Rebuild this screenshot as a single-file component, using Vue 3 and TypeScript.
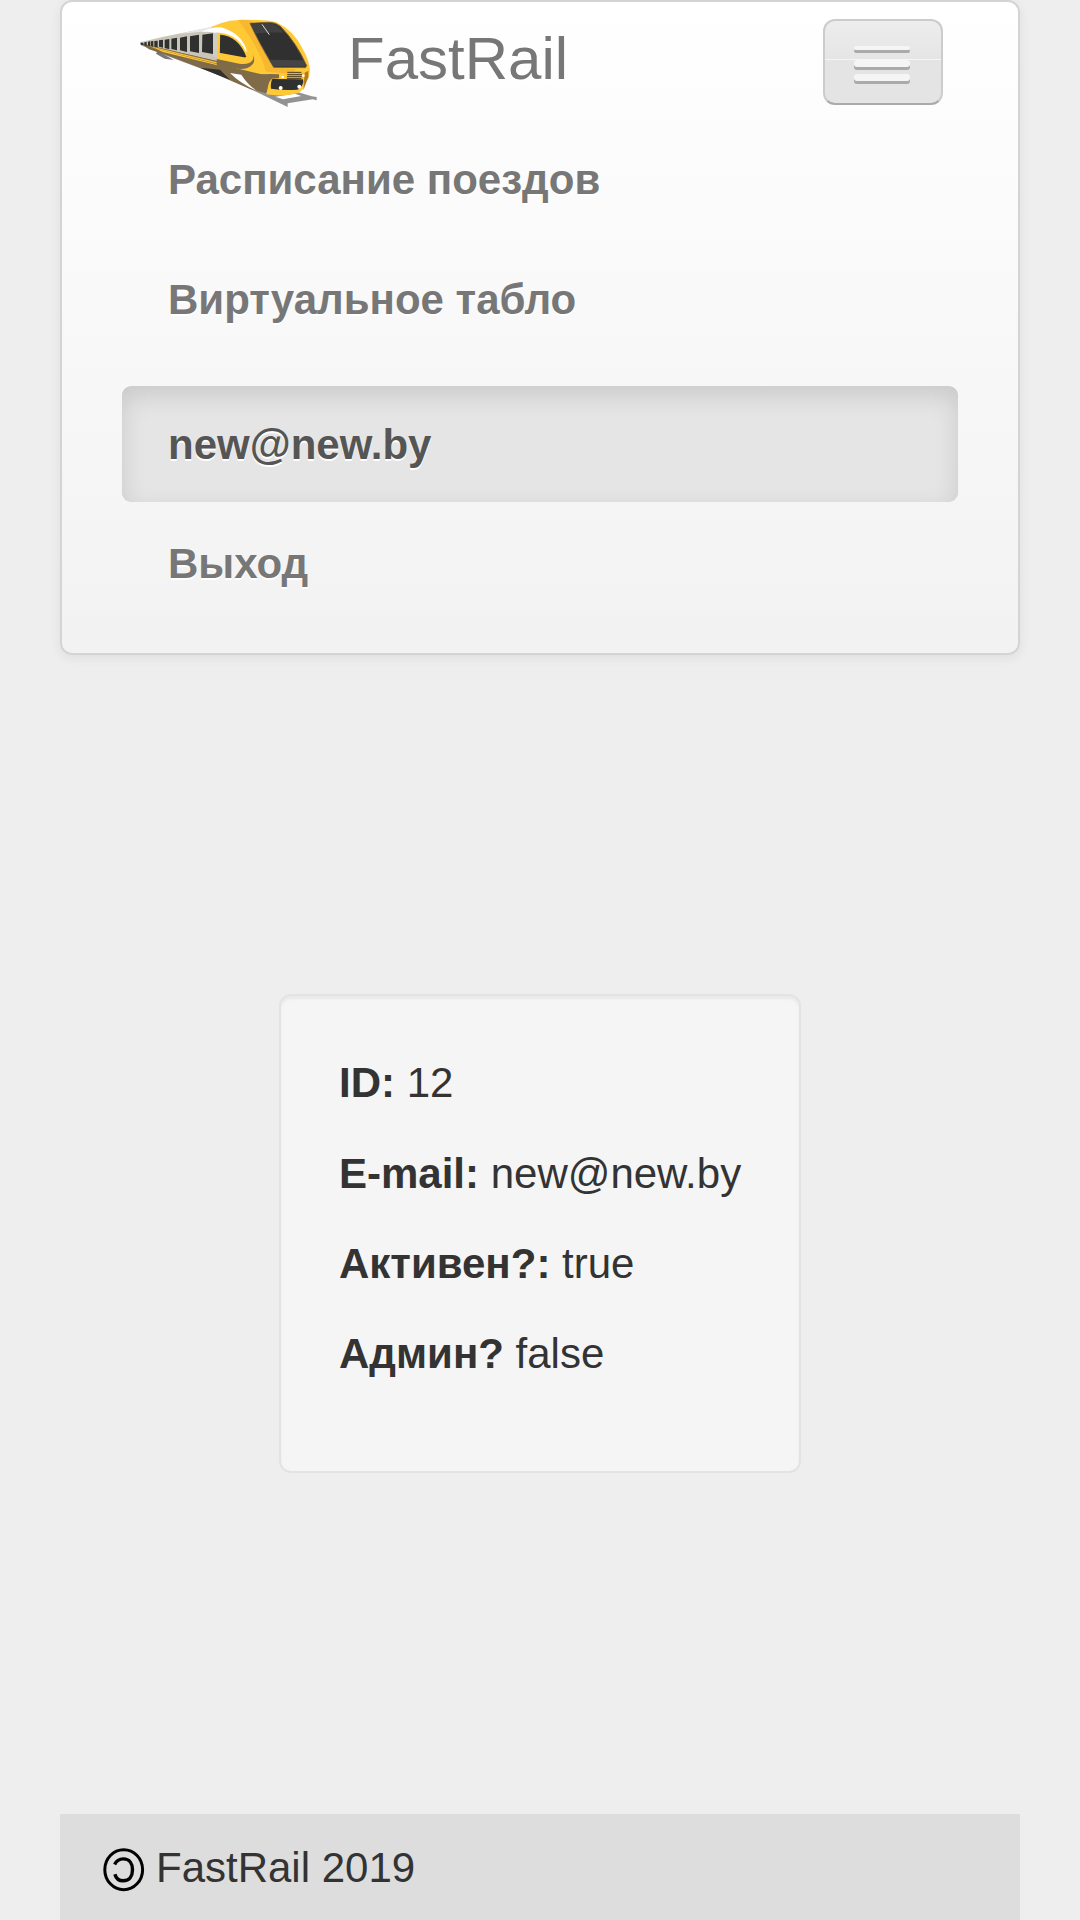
<script setup lang="ts">
interface NavItem { label: string; active?: boolean; separated?: boolean }
interface Field { label: string; value: string }

const items: NavItem[] = [
  { label: 'Расписание поездов' },
  { label: 'Виртуальное табло' },
  { label: 'new@new.by', active: true, separated: true },
  { label: 'Выход' },
]
const fields: Field[] = [
  { label: 'ID:', value: '12' },
  { label: 'E-mail:', value: 'new@new.by' },
  { label: 'Активен?:', value: 'true' },
  { label: 'Админ?', value: 'false' },
]
</script>

<template>
  <div class="page">
    <header class="navbar">
      <div class="top">
        <a class="brand">
          <svg class="train" viewBox="30 27 531 264" preserveAspectRatio="none">
            <path d="M85 128l170 45 230 68 60 18 15 2v10l-12-3-75 12v11L300 208 130 145z" fill="#929292" />
            <path d="M436 260l58-9 20 7-55 10z" fill="#fff" />
            <path d="M83 122l48 28-27-4-26-15z" fill="#777" />
            <path d="M30 97l70-17 157-31 26 3 20 66-42 45-90-20L34 108z" fill="#c9c6b9" />
            <path d="M150 71l115-25 8 7-60 12z" fill="#e7e7e7" />
            <path d="M30 100l50 11 100 23 80 19 28-5 85 15 50 27 20 10-18 20-17 30-48-13-120-52-115-44-68-23z" fill="#806b49" />
            <path d="M218 174l52 5 30 30-60-24-28-11z" fill="#303030" />
            <path d="M50 105l40 10 170 38v17l-44-12-148-40z" fill="#806b49" />
            <path d="M55 107l207 50v4L78 116z" fill="#f9be34" />
            <path d="M78 116l184 47v3L98 126z" fill="#ffc936" />
            <g fill="#303030">
              <path d="M32 98h8v8l-8-2zM43 97l7-1v12l-7-2zM54 95l6-1v15l-6-2zM62 94l8-1v17l-8-2zM73 93l10-1v20l-10-2zM87 91l12-2v24l-12-3z" />
              <path d="M104 89l14-2v31l-14-4zM124 86l17-3v38l-17-4zM150 83l21-4v47l-21-5zM180 79l27-5v55l-27-5zM217 74l32-4v62l-33-6z" />
            </g>
            <path d="M243 51Q270 38 300 32q40-4 84-2 30 0 55 7 52 24 78 78 20 34 23 64l-3 22-16 29q-3 17-28 22-40 8-84 1l12-56-30-5-60-14-70-18V67z" fill="#ffc936" />
            <path d="M214 66q22-14 58-14 60 16 78 68l-4 22q-21-68-85-72-20-7-47-4z" fill="#fff" />
            <path d="M249 70l16-3-3 76-13-5z" fill="#d0cdc0" />
            <path d="M268 71q61 5 84 71l-7 3-78-14z" fill="#303030" stroke="#ffc936" stroke-width="5" />
            <path d="M324 30q30-3 45 5 27 73 62 137l67 5-10 14-80-6q-18-67-84-155z" fill="#f7b830" />
            <path d="M260 147l68 14q26 4 37-7 9-9 3-22 9 17 1 29-12 17-41 16l-68-13z" fill="#806b49" />
            <path d="M260 168l63 19q49 7 99 5l25 1v12l-21 1q-12 8-18 42l-61-21-55-33z" fill="#806b49" />
            <path d="M300 189l34 5q17 28 47 49-52-24-81-54z" fill="#fff" />
            <path d="M360 40l57-3q20 0 34 12 48 48 79 118l-4 6-95-1q-44-73-71-132z" fill="#303030" stroke="#7e6638" stroke-width="3" />
            <path d="M418 149l101 2 9 19-98-1z" fill="#454545" />
            <path d="M361 40l53-1q20 0 38 18l8 11q-49-1-84 3z" fill="#404040" />
            <path d="M396 43l22 31" stroke="#ddd" stroke-width="3" fill="none" />
            <path d="M427 207l92 1 1 8q-5 19-18 23-40 3-79-3-2-18 4-29z" fill="#303030" />
            <path d="M471 187h42l10 4-6 17-48-2z" fill="#f5b12f" />
            <path d="M472 187h42M472 194h44M471 200h44M471 206h43" stroke="#463c25" stroke-width="3" />
            <path d="M524 188l11-6v19l-15 40z" fill="#b37b19" />
            <g fill="#fff"><circle cx="452" cy="234" r="6" /><circle cx="508" cy="230" r="6" /><circle cx="458" cy="201" r="4" /><circle cx="520" cy="197" r="4" /></g>
          </svg>
          <span class="name">FastRail</span>
        </a>
        <button class="toggle" aria-label="Menu">
          <i class="bar"></i><i class="bar mid"></i><i class="bar last"></i>
        </button>
      </div>
      <nav class="menu">
        <a v-for="item in items" :key="item.label" class="item"
           :class="{ active: item.active, separated: item.separated }">{{ item.label }}</a>
      </nav>
    </header>

    <main class="content">
      <section class="well">
        <p v-for="field in fields" :key="field.label" class="field"><b>{{ field.label }}</b> {{ field.value }}</p>
      </section>
    </main>

    <footer class="footer">
      <svg class="copyleft" viewBox="0 0 42 44">
        <ellipse cx="20.7" cy="21.7" rx="18.9" ry="20" fill="none" stroke="#000" stroke-width="3" />
        <path d="M11.7 16.5C13.7 12 17 10.9 20.3 10.9c6.2 0 9.2 4.6 9.2 10.9s-3 11-9.2 11c-4.5 0-7.2-2-8.4-6.6" fill="none" stroke="#000" stroke-width="3.4" />
      </svg>
      <span>FastRail 2019</span>
    </footer>
  </div>
</template>

<style>
body { margin: 0; background: #eee; }
</style>

<style scoped>
.page {
  box-sizing: border-box;
  height: 1920px;
  padding: 0 60px;
  display: flex;
  flex-direction: column;
  overflow: hidden;
  background: #eee;
  color: #333;
  font: 42px/60px "Liberation Sans", Arial, sans-serif;
}
.navbar {
  box-sizing: border-box;
  height: 655px;
  flex: none;
  padding: 0 60px;
  border: 2px solid #d4d4d4;
  border-radius: 12px;
  background: linear-gradient(#fff, #f2f2f2);
  box-shadow: 0 3px 12px rgba(0, 0, 0, .065);
}
.top {
  height: 120px;
  display: flex;
  justify-content: space-between;
  align-items: flex-start;
}
.brand {
  display: flex;
  align-items: flex-start;
  padding: 17px 0 0 18px;
  color: #777;
  text-shadow: 0 2px 0 #fff;
}
.train { width: 177px; height: 88px; display: block; }
.name { margin: 10px 0 0 31px; font-size: 60px; line-height: 60px; }
.toggle {
  box-sizing: border-box;
  width: 120px;
  height: 86px;
  margin: 17px 15px 0 0;
  padding: 25px 29px 0;
  display: flex;
  flex-direction: column;
  border: 2px solid #ccc;
  border-bottom-color: #aaa;
  border-radius: 12px;
  background: linear-gradient(#ededed 0, #e5e5e5 38px, #f5f5f5 38px, #f5f5f5 39px, #e4e4e4 39px);
}
.bar {
  width: 56px;
  height: 4px;
  flex: none;
  border-radius: 3px;
  background: #f5f5f5;
  box-shadow: 0 3px 0 #aaa;
}
.mid { height: 7px; margin-top: 10px; }
.last { height: 7px; margin-top: 7px; }
.menu { display: flex; flex-direction: column; gap: 4px; }
.item {
  box-sizing: border-box;
  height: 116px;
  padding: 28px 46px;
  border-radius: 9px;
  font-weight: bold;
  color: #777;
  text-shadow: 0 2px 0 #fff;
}
.separated { margin-top: 24px; }
.active {
  padding-top: 29px;
  color: #555;
  background: #e5e5e5;
  box-shadow: inset 0 9px 24px rgba(0, 0, 0, .125);
}
.content { flex: 1; display: flex; flex-direction: column; align-items: center; }
.well {
  box-sizing: border-box;
  width: 522px;
  height: 479px;
  margin-top: 339px;
  padding: 57px 0 0 58px;
  border: 2px solid #e3e3e3;
  border-radius: 12px;
  background: #f5f5f5;
  box-shadow: inset 0 3px 3px rgba(0, 0, 0, .05);
  white-space: nowrap;
}
.field { margin: 0 0 30px; }
.field:first-child { margin-bottom: 31px; }
.footer {
  box-sizing: border-box;
  height: 106px;
  flex: none;
  display: flex;
  align-items: flex-start;
  padding: 24px 0 0 43px;
  background: #ddd;
  line-height: 60px;
}
.copyleft { width: 42px; height: 44px; margin: 10px 11px 0 0; }
</style>
